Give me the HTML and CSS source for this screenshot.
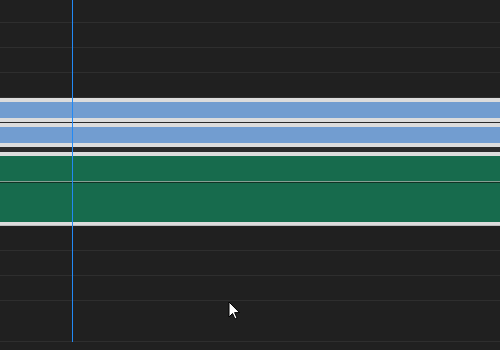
FILE: index.html
```html
<!DOCTYPE html>
<html lang="en">
<head>
    <meta charset="UTF-8">
    <title>Timeline</title>
    <link rel="stylesheet" href="styles.css">
</head>
<body>
    <div class="timeline">
        <div class="track first"></div>
        <div class="track"></div>
        <div class="track"></div>
        <div class="track"></div>

        <!-- audio clips -->
        <div class="clip-group audio">
            <div class="lane"></div>
            <div class="divider"></div>
            <div class="lane"></div>
        </div>

        <div class="gap"></div>

        <!-- video clip -->
        <div class="clip-group video">
            <div class="vlane top"></div>
            <div class="vlane bottom"></div>
        </div>

        <div class="track"></div>
        <div class="track"></div>
        <div class="track"></div>
        <div class="track tall"></div>

        <div class="playhead"></div>
        <svg class="cursor" width="13" height="20" viewBox="0 0 13 20">
            <path d="M1 1 L1 16 L4.5 12.5 L7 18 L9 17 L6.6 11.6 L11.5 11.6 Z" fill="#fff" stroke="#000" stroke-width="1"/>
        </svg>
    </div>
</body>
</html>
```

FILE: styles.css
```css
body {
    margin: 0;
    padding: 0;
    background-color: #1c1c1c;
    font-family: 'Liberation Sans', Arial, sans-serif;
}
.timeline {
    position: relative;
    width: 500px;
    height: 350px;
    background-color: #202020;
    display: flex;
    flex-direction: column;
    overflow: hidden;
}
.track {
    height: 24px;
    border-bottom: 1px solid #2e2e2e;
    flex-shrink: 0;
}
.track.first {
    height: 22px;
}
.track.tall {
    height: 40px;
}
.clip-group {
    background-color: #dcdcdc;
    flex-shrink: 0;
}
.audio {
    padding: 4px 0;
}
.audio .lane {
    height: 16px;
    background-color: #729dd0;
}
.audio .divider {
    height: 1px;
    margin: 4px 0;
    background-color: #2a2a2a;
}
.gap {
    height: 5px;
    background-color: #2b2b2b;
    flex-shrink: 0;
}
.video {
    padding: 4px 0 3px;
    border-bottom: 1px solid #bdbdbd;
}
.vlane {
    background-color: #176b4d;
}
.vlane.top {
    height: 25px;
    border-bottom: 1px solid #86a093;
}
.vlane.bottom {
    height: 39px;
    border-top: 1px solid #0f3324;
}
.playhead {
    position: absolute;
    left: 72px;
    top: 0;
    width: 1px;
    height: 342px;
    background-color: #2389f4;
}
.cursor {
    position: absolute;
    left: 228px;
    top: 301px;
}
```
